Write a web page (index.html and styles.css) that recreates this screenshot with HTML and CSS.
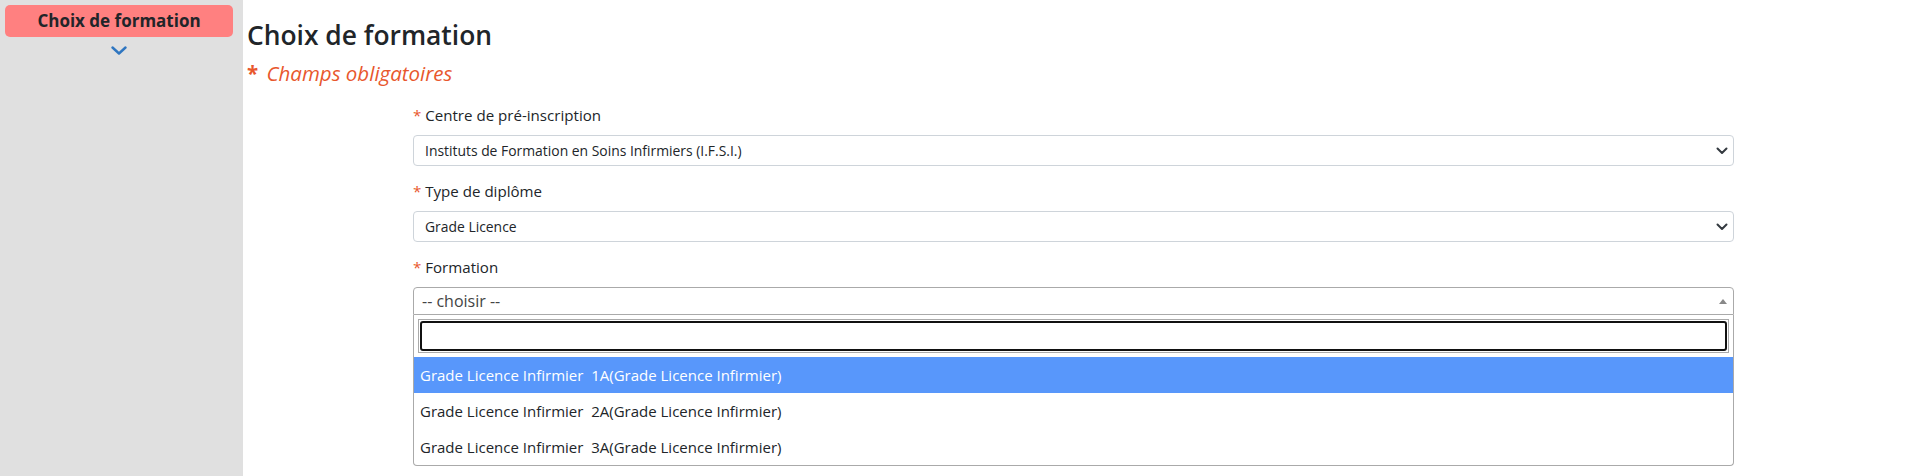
FILE: index.html
```html
<!DOCTYPE html>
<html lang="fr">
<head>
    <meta charset="UTF-8">
    <meta name="viewport" content="width=device-width, initial-scale=1.0">
    <title>Choix de formation</title>
    <link rel="stylesheet" href="styles.css">
</head>
<body>
    <div class="layout">
        <aside class="sidebar">
            <div class="step-btn">Choix de formation</div>
            <svg class="step-chevron" width="16" height="9" viewBox="0 0 16 9">
                <path d="M1.5 1.5 L8 7.5 L14.5 1.5" fill="none" stroke="#2f76c0" stroke-width="2.4" stroke-linecap="round" stroke-linejoin="round"/>
            </svg>
        </aside>

        <main class="content">
            <h3 class="page-title">Choix de formation</h3>
            <p class="required-note"><span class="star">*</span> Champs obligatoires</p>

            <form class="form-col">
                <div class="field">
                    <label class="field-label"><span class="req">*</span> Centre de pré-inscription</label>
                    <div class="select-wrap">
                        <select class="form-select">
                            <option>Instituts de Formation en Soins Infirmiers (I.F.S.I.)</option>
                        </select>
                        <svg class="select-arrow" width="12" height="8" viewBox="0 0 12 8">
                            <path d="M1.5 1.5 L6 6 L10.5 1.5" fill="none" stroke="#343a40" stroke-width="2" stroke-linecap="round" stroke-linejoin="round"/>
                        </svg>
                    </div>
                </div>

                <div class="field">
                    <label class="field-label"><span class="req">*</span> Type de diplôme</label>
                    <div class="select-wrap">
                        <select class="form-select">
                            <option>Grade Licence</option>
                        </select>
                        <svg class="select-arrow" width="12" height="8" viewBox="0 0 12 8">
                            <path d="M1.5 1.5 L6 6 L10.5 1.5" fill="none" stroke="#343a40" stroke-width="2" stroke-linecap="round" stroke-linejoin="round"/>
                        </svg>
                    </div>
                </div>

                <div class="field">
                    <label class="field-label"><span class="req">*</span> Formation</label>
                    <div class="s2">
                        <div class="s2-selection">
                            <span class="s2-rendered">-- choisir --</span>
                            <b class="s2-arrow"></b>
                        </div>
                        <div class="s2-dropdown">
                            <div class="s2-search">
                                <div class="s2-field-box">
                                    <input class="s2-field" type="search">
                                </div>
                            </div>
                            <ul class="s2-results">
                                <li class="s2-option highlighted">Grade Licence Infirmier&nbsp; 1A(Grade Licence Infirmier)</li>
                                <li class="s2-option">Grade Licence Infirmier&nbsp; 2A(Grade Licence Infirmier)</li>
                                <li class="s2-option">Grade Licence Infirmier&nbsp; 3A(Grade Licence Infirmier)</li>
                            </ul>
                        </div>
                    </div>
                </div>
            </form>
        </main>
    </div>
</body>
</html>
```

FILE: styles.css
```css
html, body {
    height: 100%;
    margin: 0;
}

body {
    font-family: 'Open Sans', 'Noto Sans', sans-serif;
    color: #212529;
    background-color: white;
    overflow: hidden;
}

.layout {
    display: flex;
    height: 100%;
}

/* barre latérale des étapes */
.sidebar {
    width: 243px;
    flex-shrink: 0;
    background-color: #e0e0e0;
    padding: 5px 10px 0 5px;
    box-sizing: border-box;
    display: flex;
    flex-direction: column;
    align-items: center;
}

.step-btn {
    width: 100%;
    height: 32px;
    line-height: 32px;
    background-color: #ff8080;
    border-radius: 5px;
    text-align: center;
    font-weight: bold;
    font-size: 17px;
    color: #212529;
}

.step-chevron {
    margin-top: 9px;
}

.content {
    flex: 1;
    padding: 20px 0 0 4px;
}

.page-title {
    margin: 0;
    font-size: 26.4px;
    font-weight: 600;
    line-height: 31px;
}

.required-note {
    margin: 8px 0 0 0;
    font-size: 20.5px;
    line-height: 28px;
    font-style: italic;
    color: #e8572d;
}

.required-note .star {
    font-style: normal;
    font-weight: bold;
    margin-right: 3px;
}

.form-col {
    margin: 17px 174px 0 166px;
}

.field {
    margin-bottom: 14px;
}

.field-label {
    display: block;
    font-size: 15.1px;
    line-height: 22px;
    margin-bottom: 9px;
}

.req {
    color: #e8572d;
}

.select-wrap {
    position: relative;
}

.form-select {
    display: block;
    width: 100%;
    height: 31px;
    padding: 0 36px 0 11px;
    font-family: inherit;
    font-size: 13.9px;
    color: #212529;
    background-color: white;
    border: 1px solid #ced4da;
    border-radius: 4px;
    appearance: none;
    -webkit-appearance: none;
}

.select-arrow {
    position: absolute;
    right: 6px;
    top: 12px;
    pointer-events: none;
}

/* liste déroulante avec recherche */
.s2-selection {
    position: relative;
    height: 28px;
    box-sizing: border-box;
    border: 1px solid #aaa;
    border-radius: 4px 4px 0 0;
    background-color: white;
}

.s2-rendered {
    display: block;
    padding-left: 8px;
    line-height: 26px;
    font-size: 16px;
    color: #444;
}

.s2-arrow {
    position: absolute;
    right: 6px;
    top: 11px;
    width: 0;
    height: 0;
    border-style: solid;
    border-width: 0 4px 5px 4px;
    border-color: transparent transparent #888 transparent;
}

.s2-dropdown {
    border: 1px solid #aaa;
    border-top: none;
    border-radius: 0 0 4px 4px;
    background-color: white;
}

.s2-search {
    padding: 4px;
}

.s2-field-box {
    border: 1px solid #aaa;
    padding: 1px;
}

.s2-field {
    display: block;
    width: 100%;
    height: 30px;
    box-sizing: border-box;
    border: 2px solid #111;
    border-radius: 3px;
    outline: none;
    padding: 0 4px;
}

.s2-results {
    list-style: none;
    margin: 0;
    padding: 0;
}

.s2-option {
    padding: 6px;
    line-height: 24px;
    font-size: 15px;
    color: #212529;
}

.s2-option.highlighted {
    background-color: #5897fb;
    color: white;
}
```
